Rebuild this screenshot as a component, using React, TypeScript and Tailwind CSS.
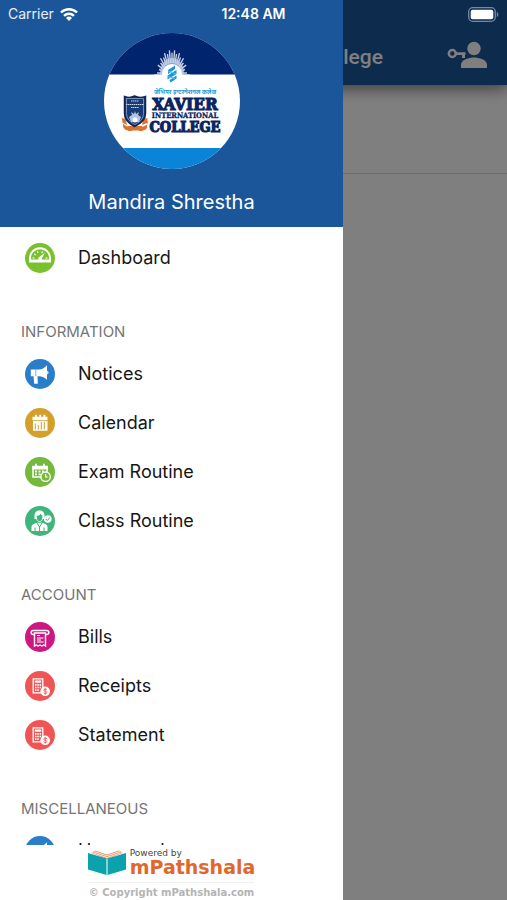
import React from "react";

type IconName = "gauge" | "horn" | "calendar" | "exam" | "class" | "bill" | "receipt";

const discs: Record<IconName, string> = {
  gauge: "#7ac12f",
  horn: "#2a7dc8",
  calendar: "#d3a02c",
  exam: "#76b83c",
  class: "#3fb57c",
  bill: "#cc1883",
  receipt: "#f05555",
};

const glyphs: Record<IconName, React.ReactNode> = {
  gauge: (
    <g>
      <path d="M4 19.500v-4a11 11.200 0 0 1 22 0v4z" fill="#fff" />
      <path d="M6 16.600v-1.600a9 8.800 0 0 1 18 0v1.600z" fill="#7ac12f" />
      <path d="M7.500 14.800l2 .5M9.300 10.800l1.500 1.400M12.300 8.300l.7 1.700M17.500 8.300l-.7 1.700M22.500 14.800l-2 .5" stroke="#fff" strokeWidth="1.100" />
      <path d="M13.800 14.500L20 9.500l-3.500 6.700z" fill="#fff" />
      <circle cx="15" cy="15.600" r="1.800" fill="#fff" />
    </g>
  ),
  horn: (
    <g fill="#fff">
      <path d="M5.800 10.500h8.200c3.500 0 5.500-1.700 8-4.300v14.600c-2.500-2.200-4.500-3.600-8-3.600H5.800z" />
      <path d="M8.500 16.500h4l.3 8.200H9.200z" />
      <path d="M22.200 11.700c1.800.6 1.800 3.300 0 3.900z" />
      <path d="M10.800 10.500v6.700" stroke="#2a7dc8" strokeWidth=".6" />
    </g>
  ),
  calendar: (
    <g>
      <path d="M7.500 8.800h15v3.400h-15zM8 13h14.500v9.800H8z" fill="#fff" />
      <path d="M11 6.800v3.500M15.200 6.800v3.500M19.400 6.800v3.500" stroke="#fff" strokeWidth="1.800" />
      <path d="M10.300 15.500v6M13.300 17v4.500M16.300 14v7.500M19.300 14v7.500" stroke="#d3a02c" strokeWidth="1" />
    </g>
  ),
  exam: (
    <g>
      <path d="M8 9.500h14v10.500H8z" fill="none" stroke="#fff" strokeWidth="1.500" />
      <path d="M7.300 9h15.400v3.500H7.300z" fill="#fff" />
      <path d="M11 6.800v3M19 6.800v3" stroke="#fff" strokeWidth="2" />
      <path d="M10 14.500h2M13.500 14.500h2M17 14.500h2M10 17.300h2M13.500 17.300h2" stroke="#fff" strokeWidth="1.800" />
      <circle cx="20.600" cy="19.700" r="4.700" fill="#76b83c" stroke="#fff" strokeWidth="1.400" />
      <path d="M20.600 17v3h2.200" fill="none" stroke="#fff" strokeWidth="1.200" />
    </g>
  ),
  class: (
    <g>
      <path d="M6.500 25v-4c0-2.500 3-3.500 6-4.200h4c3 .7 6 1.700 6 4.200v4z" fill="#fff" />
      <path d="M12 17l2.500 4 2.500-4M14.500 20v5M10 21.500V25M19 21.500V25" fill="none" stroke="#3fb57c" strokeWidth="1" />
      <path d="M9.500 13V9.500c0-3 2-5 5-5s5 2 5 5V13z" fill="#fff" />
      <path d="M11.300 9.500c2.500 0 3.500-.8 4.500-2 .5 1 1.200 1.500 2 2 0 4-1 6-3.300 6s-3.200-2-3.200-6z" fill="#3fb57c" stroke="#fff" strokeWidth=".8" />
      <circle cx="22.800" cy="13" r="3.800" fill="#fff" />
      <path d="M20.800 13l1.500 1.500 2.600-3" fill="none" stroke="#3fb57c" strokeWidth="1" />
    </g>
  ),
  bill: (
    <g>
      <path d="M9 12.500H8.200a2 2 0 0 1 0-4h13.600a2 2 0 0 1 0 4H21" fill="none" stroke="#fff" strokeWidth="1.500" />
      <path d="M9.500 11v13l1.800-1 1.800 1 1.900-1 1.900 1 1.800-1 1.800 1V11z" fill="#cc1883" stroke="#fff" strokeWidth="1.400" />
      <path d="M12 13.500h3M12 16h6.500M12 18h4M12 20h6.500" stroke="#fff" strokeWidth="1.100" />
    </g>
  ),
  receipt: (
    <g>
      <path d="M8.200 7.800h9.600v14H8.200z" fill="#f05555" stroke="#fff" strokeWidth="1.300" />
      <path d="M9.800 10.600h6.400" stroke="#fff" strokeWidth="2.200" />
      <path d="M10 13.800h1.500M12.300 13.800h1.500M14.600 13.800h1.500M10 16.500h1.500M12.300 16.500h1.500M14.600 16.500h1.500M10 19.200h1.500M12.300 19.200h1.500" stroke="#fff" strokeWidth="1.700" />
      <circle cx="20.200" cy="20.300" r="4.800" fill="#fff" />
      <path d="M21.900 18.700c-.8-1-3.200-.9-3.200.4 0 1.500 3.200.9 3.200 2.400 0 1.300-2.500 1.500-3.400.4M20.200 17.100v6.400" fill="none" stroke="#f05555" strokeWidth=".9" />
    </g>
  ),
};

interface Item {
  label: string;
  icon: IconName;
}

const sections: { title?: string; items: Item[] }[] = [
  { items: [{ label: "Dashboard", icon: "gauge" }] },
  {
    title: "INFORMATION",
    items: [
      { label: "Notices", icon: "horn" },
      { label: "Calendar", icon: "calendar" },
      { label: "Exam Routine", icon: "exam" },
      { label: "Class Routine", icon: "class" },
    ],
  },
  {
    title: "ACCOUNT",
    items: [
      { label: "Bills", icon: "bill" },
      { label: "Receipts", icon: "receipt" },
      { label: "Statement", icon: "receipt" },
    ],
  },
  { title: "MISCELLANEOUS", items: [{ label: "Homework", icon: "horn" }] },
];

function MenuItem({ label, icon }: Item) {
  return (
    <li>
      <a href="#" className="flex h-[49px] items-center gap-[23px] pl-[25px] text-lg text-[#161616]">
        <svg viewBox="0 0 30 30" className="size-[30px] shrink-0" aria-hidden="true">
          <circle cx="15" cy="15" r="15" fill={discs[icon]} />
          {glyphs[icon]}
        </svg>
        {label}
      </a>
    </li>
  );
}

function CollegeLogo() {
  const rays = Array.from({ length: 19 }, (_, i) => {
    const a = Math.PI + (i * Math.PI) / 18;
    const k = i % 2 ? 0.88 : 1;
    return {
      x: 68 + 15 * k * Math.cos(a),
      y: 40 + 23 * k * Math.sin(a),
      sx: 68 + 9 * Math.cos(a),
      sy: 40 + 10 * Math.sin(a),
    };
  });
  return (
    <svg viewBox="0 0 136 136" className="size-[136px]" role="img" aria-label="Xavier International College">
      <defs>
        <clipPath id="crest">
          <circle cx="68" cy="68" r="68" />
        </clipPath>
      </defs>
      <g clipPath="url(#crest)">
        <path d="M0 0h136v136H0z" fill="#fff" />
        <path d="M0 0h136v41.500H0z" fill="#00246e" />
        <path d="M0 115h136v21H0z" fill="#0b84d8" />
        <ellipse cx="68" cy="40" rx="12" ry="15" fill="#8ea3cc" />
        {rays.map((r, i) => (
          <path key={i} d={`M${r.sx} ${r.sy}L${r.x} ${r.y}`} stroke="#c3cfe6" strokeWidth="1.400" />
        ))}
        <circle cx="68" cy="41" r="10" fill="#fff" />
        <path d="M50 41.500h36v14H50z" fill="#fff" />
        <path d="M64 37l7-4.500v3.500l-7 5zM63.500 42.500l9-5.500v4l-9 5.500zM65.500 47l7-4.500v3l-6 4z" fill="#1695dc" />
        <path d="M64 38l8 3M64 43.500l7 2" fill="none" stroke="#52c5ed" strokeWidth="1" />
      </g>
      <text x="81" y="61" textAnchor="middle" fontSize="6" fontWeight="700" fill="#249bd8" fontFamily="'Noto Sans', sans-serif">
        जेभियर इन्टरनेशनल कलेज
      </text>
      <g fill="#0c2461" stroke="#0c2461" fontWeight="700" textAnchor="middle" fontFamily="'DejaVu Serif Condensed', 'DejaVu Serif', serif">
        <text x="81" y="77" fontSize="17" strokeWidth="1.100">XAVIER</text>
        <text x="81" y="85" fontSize="7.500" strokeWidth=".3">INTERNATIONAL</text>
        <text x="81" y="98.500" fontSize="14.500" strokeWidth="1.100">COLLEGE</text>
      </g>
      <path d="M19 87c-2 4 3 7 9 7v4c-5 0-9-2-9-5zM43 87c3 4-2 7-8 7v4c5 0 9-2 8-5z" fill="#d9732f" />
      <path d="M17.500 85l4 1 1.500 6-4-2zM43.500 85l-4 1-1.500 6 5-2zM24 93h14v4.500H24z" fill="#d9732f" />
      <path d="M20.500 63.500q5.500 2 10-.5q5 2.500 11 .5v17q0 8-11 13q-10-5-10-13z" fill="#173a78" stroke="#122450" strokeWidth="1.500" />
      <path d="M22.500 65.500h17v15q0 7-8.500 11q-8.500-4-8.500-11z" fill="none" stroke="#9fb3d3" strokeWidth=".7" />
      <path d="M27 68h8M22 71.500h18M27 74.500h8" stroke="#cdd8ea" strokeWidth="1.200" strokeDasharray="1.500 .5" />
      <path d="M31 78l1 3 3-2-1 3 3 2-2 5h-8l-2-5 3-2-1-3 3 2z" fill="#b5c5df" />
      <circle cx="31" cy="87" r="2.500" fill="#fff" />
    </svg>
  );
}

function BookLogo() {
  return (
    <svg viewBox="0 0 38 25" className="h-[25px] w-[38px]" aria-hidden="true">
      <path d="M3 3l4-2.500 12 4 12-4L35 3 19 9z" fill="#e98b62" />
      <path d="M4 2.500l15 5 15-5M6 1.500l13 4.300 13-4.300" fill="none" stroke="#fff" strokeWidth=".8" />
      <path d="M0 3l18.500 5.500V25L0 19.500zM38 3L19.500 8.500V25L38 19.500z" fill="#0aa3ad" />
    </svg>
  );
}

function StatusBar() {
  return (
    <div className="absolute inset-x-0 top-0 z-20 grid h-7 grid-cols-3 items-center px-2 text-sm text-white">
      <div className="flex items-center gap-[6px] text-white/90">
        Carrier
        <svg viewBox="0 0 18 14" className="h-[14px] w-[18px]" fill="none" stroke="#fff" strokeWidth="2.400" aria-label="Wi-Fi">
          <path d="M1 5.500a11.500 11.500 0 0 1 16 0M4 8.800a7.200 7.200 0 0 1 10 0" />
          <path d="M6 10.900a4.300 4.300 0 0 1 6 0L9 14z" fill="#fff" stroke="none" />
        </svg>
      </div>
      <span className="text-center font-semibold">12:48 AM</span>
      <svg viewBox="0 0 31 15" className="h-[15px] w-[31px] justify-self-end" aria-label="Battery full">
        <rect x=".7" y=".7" width="26.600" height="13.600" rx="4" fill="none" stroke="#718aa8" strokeWidth="1.300" />
        <rect x="2.700" y="2.700" width="22.600" height="9.600" rx="2" fill="#fff" />
        <path d="M28.800 5c2 .6 2 4.400 0 5z" fill="#718aa8" />
      </svg>
    </div>
  );
}

export default function App() {
  return (
    <div className="relative h-screen overflow-hidden bg-white font-['Inter','Noto_Sans',sans-serif]">
      <header className="flex h-[85px] items-end justify-between bg-[#1a569b] px-5 pb-4 text-white shadow-[0_4px_14px_rgba(0,0,0,0.5)]">
        <button type="button" aria-label="Menu" className="w-10">
          <svg viewBox="0 0 24 24" className="size-6" stroke="currentColor" strokeWidth="2">
            <path d="M3 6h18M3 12h18M3 18h18" />
          </svg>
        </button>
        <h1 className="font-['Roboto',sans-serif] text-[21px] leading-6 font-medium">Xavier International College</h1>
        <button type="button" aria-label="Switch account" className="w-10">
          <svg viewBox="0 0 40 28" className="h-7 w-10">
            <circle cx="27" cy="7.500" r="6.700" fill="currentColor" />
            <path d="M14 27v-3.500c0-4.500 8-7 13-7s13 2.500 13 7V27z" fill="currentColor" />
            <circle cx="5.300" cy="12.500" r="3.500" fill="none" stroke="currentColor" strokeWidth="2.500" />
            <path d="M9 11.200h9.500v2.800H18v3h-3v-3H9z" fill="currentColor" />
          </svg>
        </button>
      </header>
      <div className="h-[89px] border-b border-[#d8d8d8]" />

      <div className="absolute inset-0 bg-black/50" />
      <aside className="absolute inset-y-0 left-0 flex w-[343px] flex-col bg-white">
        <div className="flex h-[227px] shrink-0 flex-col items-center gap-[19px] bg-[#1b569a] pt-[33px] text-white">
          <CollegeLogo />
          <p className="text-xl">Mandira Shrestha</p>
        </div>
        <nav className="min-h-0 flex-1 overflow-hidden pt-[6px]">
          {sections.map((section, i) => (
            <section key={i}>
              {section.title && (
                <h2 className="flex h-[67px] items-end pb-[5px] pl-[21px] text-[15px] leading-6 text-[#757575]">{section.title}</h2>
              )}
              <ul>
                {section.items.map((item) => (
                  <MenuItem key={item.label} {...item} />
                ))}
              </ul>
            </section>
          ))}
        </nav>
        <footer className="flex h-[55px] shrink-0 flex-col items-center bg-white font-['DejaVu_Sans',sans-serif]">
          <div className="flex items-center gap-1 pt-1">
            <BookLogo />
            <div>
              <p className="text-[9px] leading-[9px] text-[#444]">Powered by</p>
              <p className="text-[19px] leading-[18px] font-bold text-[#e2672c]">mPathshala</p>
            </div>
          </div>
          <p className="mt-[6px] border-t border-[#f1f1f1] pt-1 text-[10px] leading-3 font-bold text-[#b4b4b4]">© Copyright mPathshala.com</p>
        </footer>
      </aside>
      <StatusBar />
    </div>
  );
}
